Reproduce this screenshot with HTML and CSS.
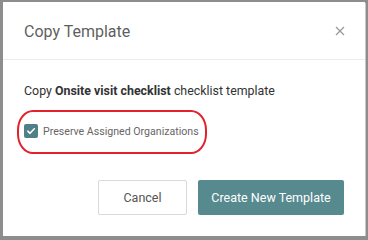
FILE: index.html
```html
<!DOCTYPE html>
<html lang="en">
<head>
    <meta charset="UTF-8">
    <title>Copy Template</title>
    <link rel="stylesheet" href="styles.css">
</head>
<body>
    <div class="modal">
        <div class="modal-header">
            <span class="modal-title">Copy Template</span>
            <span class="close">
                <svg width="10" height="10" viewBox="0 0 10 10"><path d="M1 1 L9 9 M9 1 L1 9" stroke="#9a9a9a" stroke-width="1.3"/></svg>
            </span>
        </div>
        <div class="modal-body">
            <p class="intro">Copy <b>Onsite visit checklist</b> checklist template</p>
            <label class="check-row">
                <span class="checkbox">
                    <svg width="10" height="10" viewBox="0 0 10 10"><path d="M1.8 5.2 L4 7.3 L8.3 2.8" fill="none" stroke="#fff" stroke-width="1.6" stroke-linecap="round" stroke-linejoin="round"/></svg>
                </span>
                Preserve Assigned Organizations
            </label>
            <div class="highlight"></div>
        </div>
        <div class="modal-footer">
            <button class="btn btn-cancel">Cancel</button>
            <button class="btn btn-primary">Create New Template</button>
        </div>
    </div>
</body>
</html>
```

FILE: styles.css
```css
body {
    margin: 0;
    background-color: #8d8d8d;
    font-family: Roboto, "Liberation Sans", Arial, sans-serif;
}
.modal {
    position: relative;
    margin: 2px 3px 0 3px;
    height: 234px;
    background: white;
    box-shadow: 1px 1px 0 #c8c8c8;
}
.modal-header {
    height: 57px;
    padding: 0 20px 0 21px;
    border-bottom: 1px solid #ececec;
    display: flex;
    align-items: center;
    justify-content: space-between;
}
.modal-title {
    font-size: 16px;
    color: #5f5f5f;
    padding-top: 1px;
}
.close {
    display: flex;
    padding-top: 1px;
}
.modal-body {
    position: relative;
    padding: 0 21px;
    height: 120px;
}
.intro {
    margin: 0;
    padding-top: 23px;
    font-size: 12.4px;
    color: #333;
}
.intro b {
    font-weight: 700;
}
.check-row {
    display: flex;
    align-items: center;
    gap: 5px;
    margin-top: 26px;
    font-size: 10.6px;
    color: #666;
}
.checkbox {
    width: 14px;
    height: 14px;
    border-radius: 2px;
    background-color: #4f7f87;
    display: flex;
    align-items: center;
    justify-content: center;
}
.highlight {
    position: absolute;
    left: 14px;
    top: 50px;
    width: 186px;
    height: 40px;
    border: 2px solid #e3222b;
    border-radius: 16px / 20px;
}
.modal-footer {
    display: flex;
    justify-content: flex-end;
    gap: 11px;
    padding: 0 21px;
}
.btn {
    height: 35px;
    font-family: Roboto, "Liberation Sans", Arial, sans-serif;
    font-size: 12.5px;
    border-radius: 2px;
    cursor: pointer;
}
.btn-cancel {
    width: 89px;
    background: white;
    border: 1px solid #d9d9d9;
    color: #555;
}
.btn-primary {
    width: 146px;
    background-color: #578a8f;
    border: none;
    color: white;
}
```
